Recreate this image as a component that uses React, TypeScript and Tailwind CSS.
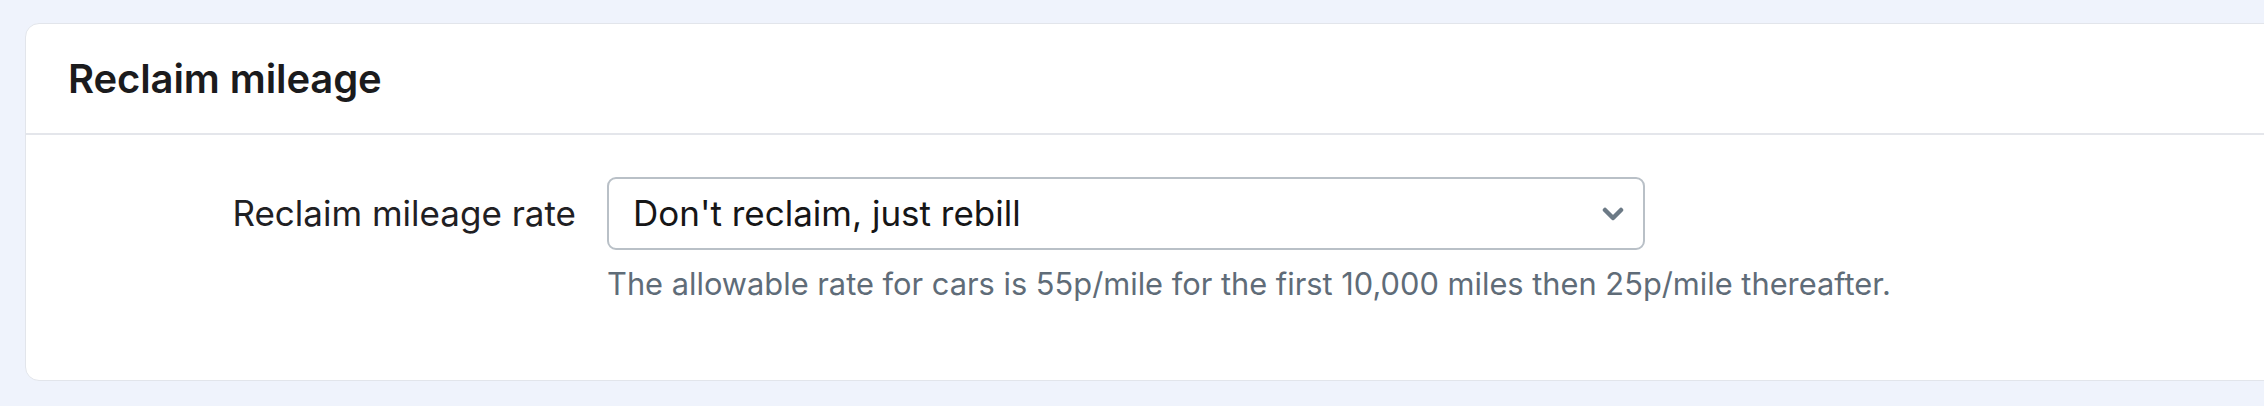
import React from "react";

export default function App() {
  return (
    <div
      className="w-[2264px] h-[406px] overflow-hidden bg-[#eff3fc] pt-[23px] pl-[25px]"
      style={{ fontFamily: "Inter, 'Noto Sans', sans-serif" }}
    >
      <div className="w-[2300px] h-[358px] bg-white border border-[#e2e5eb] rounded-[14px] flex flex-col">
        <div className="h-[111px] border-b-2 border-[#e4e6eb] flex items-center pl-[42px]">
          <h2 className="text-[40px] font-semibold text-[#1b1b1d] tracking-[-0.1px] leading-none">
            Reclaim mileage
          </h2>
        </div>
        <div className="flex pt-[42px]">
          <div className="w-[550px] h-[73px] flex items-center justify-end">
            <span className="text-[35px] text-[#1f2023] leading-none">Reclaim mileage rate</span>
          </div>
          <div className="ml-[31px] flex flex-col">
            <div className="w-[1038px] h-[73px] border-2 border-[#b9c0c7] rounded-[9px] flex items-center justify-between pl-[24px] pr-[19px]">
              <span className="text-[35px] text-[#161617] leading-none">Don't reclaim, just rebill</span>
              <svg width="22" height="14" viewBox="0 0 22 14" fill="none">
                <path d="M3 3 L11 11 L19 3" stroke="#6c7a86" strokeWidth="4.5" strokeLinecap="round" strokeLinejoin="round" />
              </svg>
            </div>
            <p className="mt-[19px] text-[30.8px] text-[#5f6c78] leading-none">
              The allowable rate for cars is 55p/mile for the first 10,000 miles then 25p/mile thereafter.
            </p>
          </div>
        </div>
      </div>
    </div>
  );
}
